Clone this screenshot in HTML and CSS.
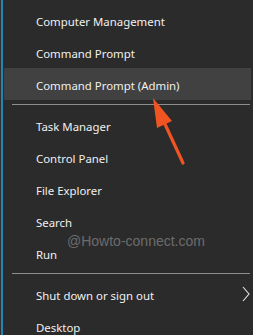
FILE: index.html
```html
<!DOCTYPE html>
<html lang="en">
<head>
  <meta charset="UTF-8" />
  <title>Win+X menu</title>
  <link rel="stylesheet" href="styles.css">
</head>
<body>
  <div class="menu">
    <div class="item">Computer Management</div>
    <div class="item">Command Prompt</div>
    <div class="item active">Command Prompt (Admin)</div>
    <div class="sep"></div>
    <div class="item">Task Manager</div>
    <div class="item">Control Panel</div>
    <div class="item">File Explorer</div>
    <div class="item">Search</div>
    <div class="item">Run</div>
    <div class="sep"></div>
    <div class="item sub">Shut down or sign out
      <svg class="chev" width="8" height="16" viewBox="0 0 8 16">
        <path d="M1 1 L7 8 L1 15" fill="none" stroke="#e8e8e8" stroke-width="1.1"/>
      </svg>
    </div>
    <div class="item">Desktop</div>
  </div>

  <div class="mark">@Howto-connect.com</div>

  <!-- callout arrow pointing at the admin item -->
  <svg class="arrow" width="253" height="335" viewBox="0 0 253 335">
    <line x1="183" y1="163" x2="164" y2="122" stroke="#f05423" stroke-width="3.2" stroke-linecap="round"/>
    <polygon points="153,98 172,121 157,128" fill="#f05423"/>
  </svg>
</body>
</html>
```

FILE: styles.css
```css
* {
  margin: 0;
  padding: 0;
  box-sizing: border-box;
}

body {
  background: #2b2b2b;
  width: 253px;
  height: 335px;
  overflow: hidden;
  border-left: 1px solid #303030;
  font-family: 'Noto Sans', 'Open Sans', sans-serif;
}

.menu {
  border-left: 2px solid #1d86b6;
  height: 100%;
  padding-top: 4px;
}

.item {
  position: relative;
  height: 32px;
  line-height: 35px;
  margin: 0 2px 0 1px;
  padding-left: 32px;
  font-size: 11.4px;
  color: #f0f0f0;
  white-space: nowrap;
}

.item.active {
  background: #414141;
}

.sep {
  height: 9px;
  margin: 0 3px 0 9px;
  display: flex;
  align-items: center;
}

.sep::after {
  content: "";
  flex: 1;
  height: 1px;
  background: #8e8e8e;
}

.chev {
  position: absolute;
  right: 1px;
  top: 8px;
}

.mark {
  position: absolute;
  left: 67px;
  top: 232px;
  font-family: 'Liberation Sans', Arial, sans-serif;
  font-size: 14px;
  line-height: 18px;
  color: #6b6b6b;
}

.arrow {
  position: absolute;
  left: 0;
  top: 0;
}
```
